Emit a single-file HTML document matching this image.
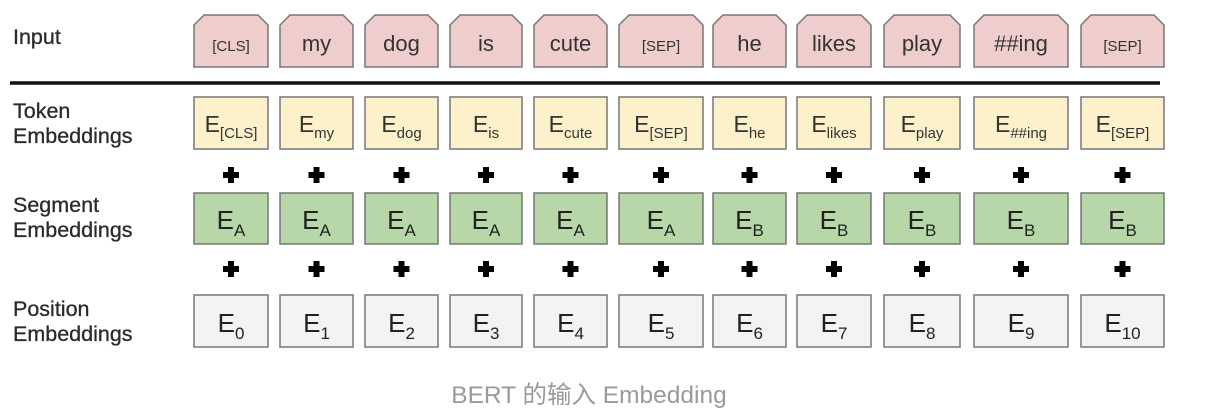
<!DOCTYPE html>
<html><head><meta charset="utf-8"><style>
html,body{margin:0;padding:0;background:#fff;width:1208px;height:410px;overflow:hidden}
svg text{font-family:"Liberation Sans","Noto Sans CJK SC",sans-serif}
</style></head><body>
<svg width="1208" height="410" xmlns="http://www.w3.org/2000/svg">
<g fill="#2a2a2a" font-size="21.5" stroke="#2a2a2a" stroke-width="0.3">
<text x="13" y="44">Input</text>
<text x="13" y="118">Token</text><text x="13" y="143">Embeddings</text>
<text x="13" y="212">Segment</text><text x="13" y="237">Embeddings</text>
<text x="13" y="316">Position</text><text x="13" y="341">Embeddings</text>
</g>
<line x1="10" y1="83" x2="1160" y2="83" stroke="#111" stroke-width="3.5"/>
<g id="g" stroke="#777" stroke-width="1.5"></g>
<text x="589" y="403" text-anchor="middle" font-size="24.5" fill="#9a9a9a">BERT 的输入 Embedding</text>
</svg>
<script>
var cols=[[194,268],[280,353],[365,438],[450,522],[534,607],[619,703],[713,786],[797,871],[884,960],[974,1068],[1081,1164]];
var inp=["[CLS]","my","dog","is","cute","[SEP]","he","likes","play","##ing","[SEP]"];
var s='';
cols.forEach(function(c,i){
 var a=c[0],b=c[1],m=(a+b)/2,ch=10;
 s+='<path d="M'+a+' 67 L'+a+' '+(15+ch)+' L'+(a+ch)+' 15 L'+(b-ch)+' 15 L'+b+' '+(15+ch)+' L'+b+' 67 Z" fill="#f0cdcd"/>';
 var small=(inp[i][0]=='[');
 s+='<text x="'+m+'" y="51" text-anchor="middle" stroke="none" fill="#333" font-size="'+(small?15:22)+'">'+inp[i]+'</text>';
 s+='<rect x="'+a+'" y="97" width="'+(b-a)+'" height="52" fill="#fdf1cc"/>';
 s+='<text x="'+m+'" y="132" text-anchor="middle" stroke="none" fill="#333" font-size="23">E<tspan font-size="15" dy="6">'+inp[i]+'</tspan></text>';
 s+='<rect x="'+a+'" y="193" width="'+(b-a)+'" height="51" fill="#b7d7a8"/>';
 s+='<text x="'+m+'" y="229" text-anchor="middle" stroke="none" fill="#222" font-size="26">E<tspan font-size="17" dy="7">'+(i<6?'A':'B')+'</tspan></text>';
 s+='<rect x="'+a+'" y="295" width="'+(b-a)+'" height="52" fill="#f3f3f3"/>';
 s+='<text x="'+m+'" y="332" text-anchor="middle" stroke="none" fill="#222" font-size="26">E<tspan font-size="17" dy="7">'+i+'</tspan></text>';
 [175,269].forEach(function(y){
  s+='<path d="M'+(m-8)+' '+y+' h16 M'+m+' '+(y-8)+' v16" stroke="#000" stroke-width="6"/>';
 });
});
document.getElementById('g').innerHTML=s;
</script>
</body></html>
